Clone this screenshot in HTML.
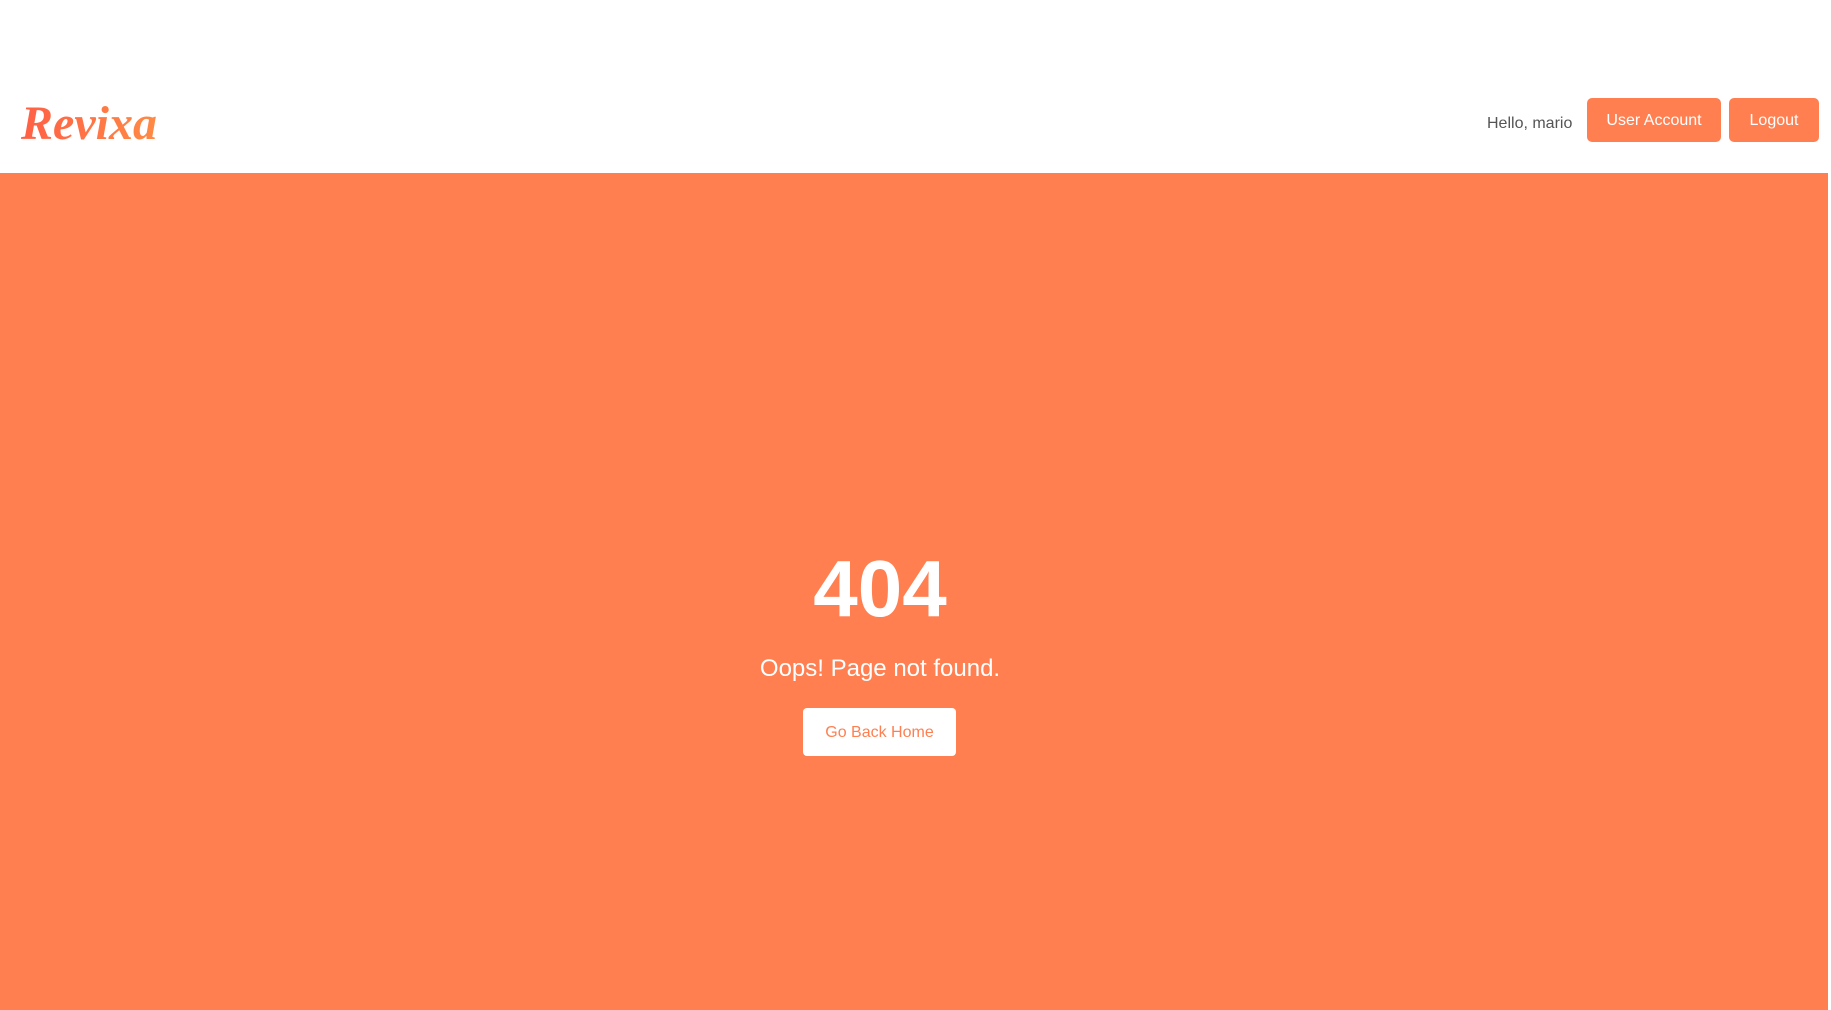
<!DOCTYPE html>
<html><head><meta charset="utf-8"><style>
html,body{margin:0;padding:0;width:1831px;height:1010px;overflow:hidden;background:#fff;font-family:"Liberation Sans",sans-serif}
.hdr{position:absolute;left:0;top:0;width:1831px;height:173px;background:#fff}
.logo{position:absolute;left:21px;top:96px;font-family:"Liberation Serif",serif;font-style:italic;font-weight:bold;font-size:48px;letter-spacing:0;background:linear-gradient(90deg,#ff5f45,#ff8a45);-webkit-background-clip:text;background-clip:text;color:transparent}
.hello{position:absolute;left:1487px;top:115px;font-size:16px;color:#555}
.btn{position:absolute;top:98px;height:44px;background:#ff7f50;color:#fff;border-radius:5px;font-size:16px;line-height:46px;text-align:center}
.main{position:absolute;left:0;top:173px;width:1828px;height:837px;background:#ff7f50}
.c{position:absolute;left:0;width:1760px;text-align:center;color:#fff}
.n{top:544px;font-size:80px;font-weight:bold;line-height:90px}
.o{top:651px;font-size:24px;line-height:36px}
.gb{position:absolute;left:803px;top:708px;width:153px;height:48px;background:#fff;border-radius:4px;color:#ff7f50;font-size:16px;line-height:50px;text-align:center}
</style></head><body>
<div class="hdr">
<div class="logo">Revixa</div>
<div class="hello">Hello, mario</div>
<div class="btn" style="left:1587px;width:134px">User Account</div>
<div class="btn" style="left:1729px;width:90px">Logout</div>
</div>
<div class="main"></div>
<div class="c n">404</div>
<div class="c o">Oops! Page not found.</div>
<div class="gb">Go Back Home</div>
</body></html>
